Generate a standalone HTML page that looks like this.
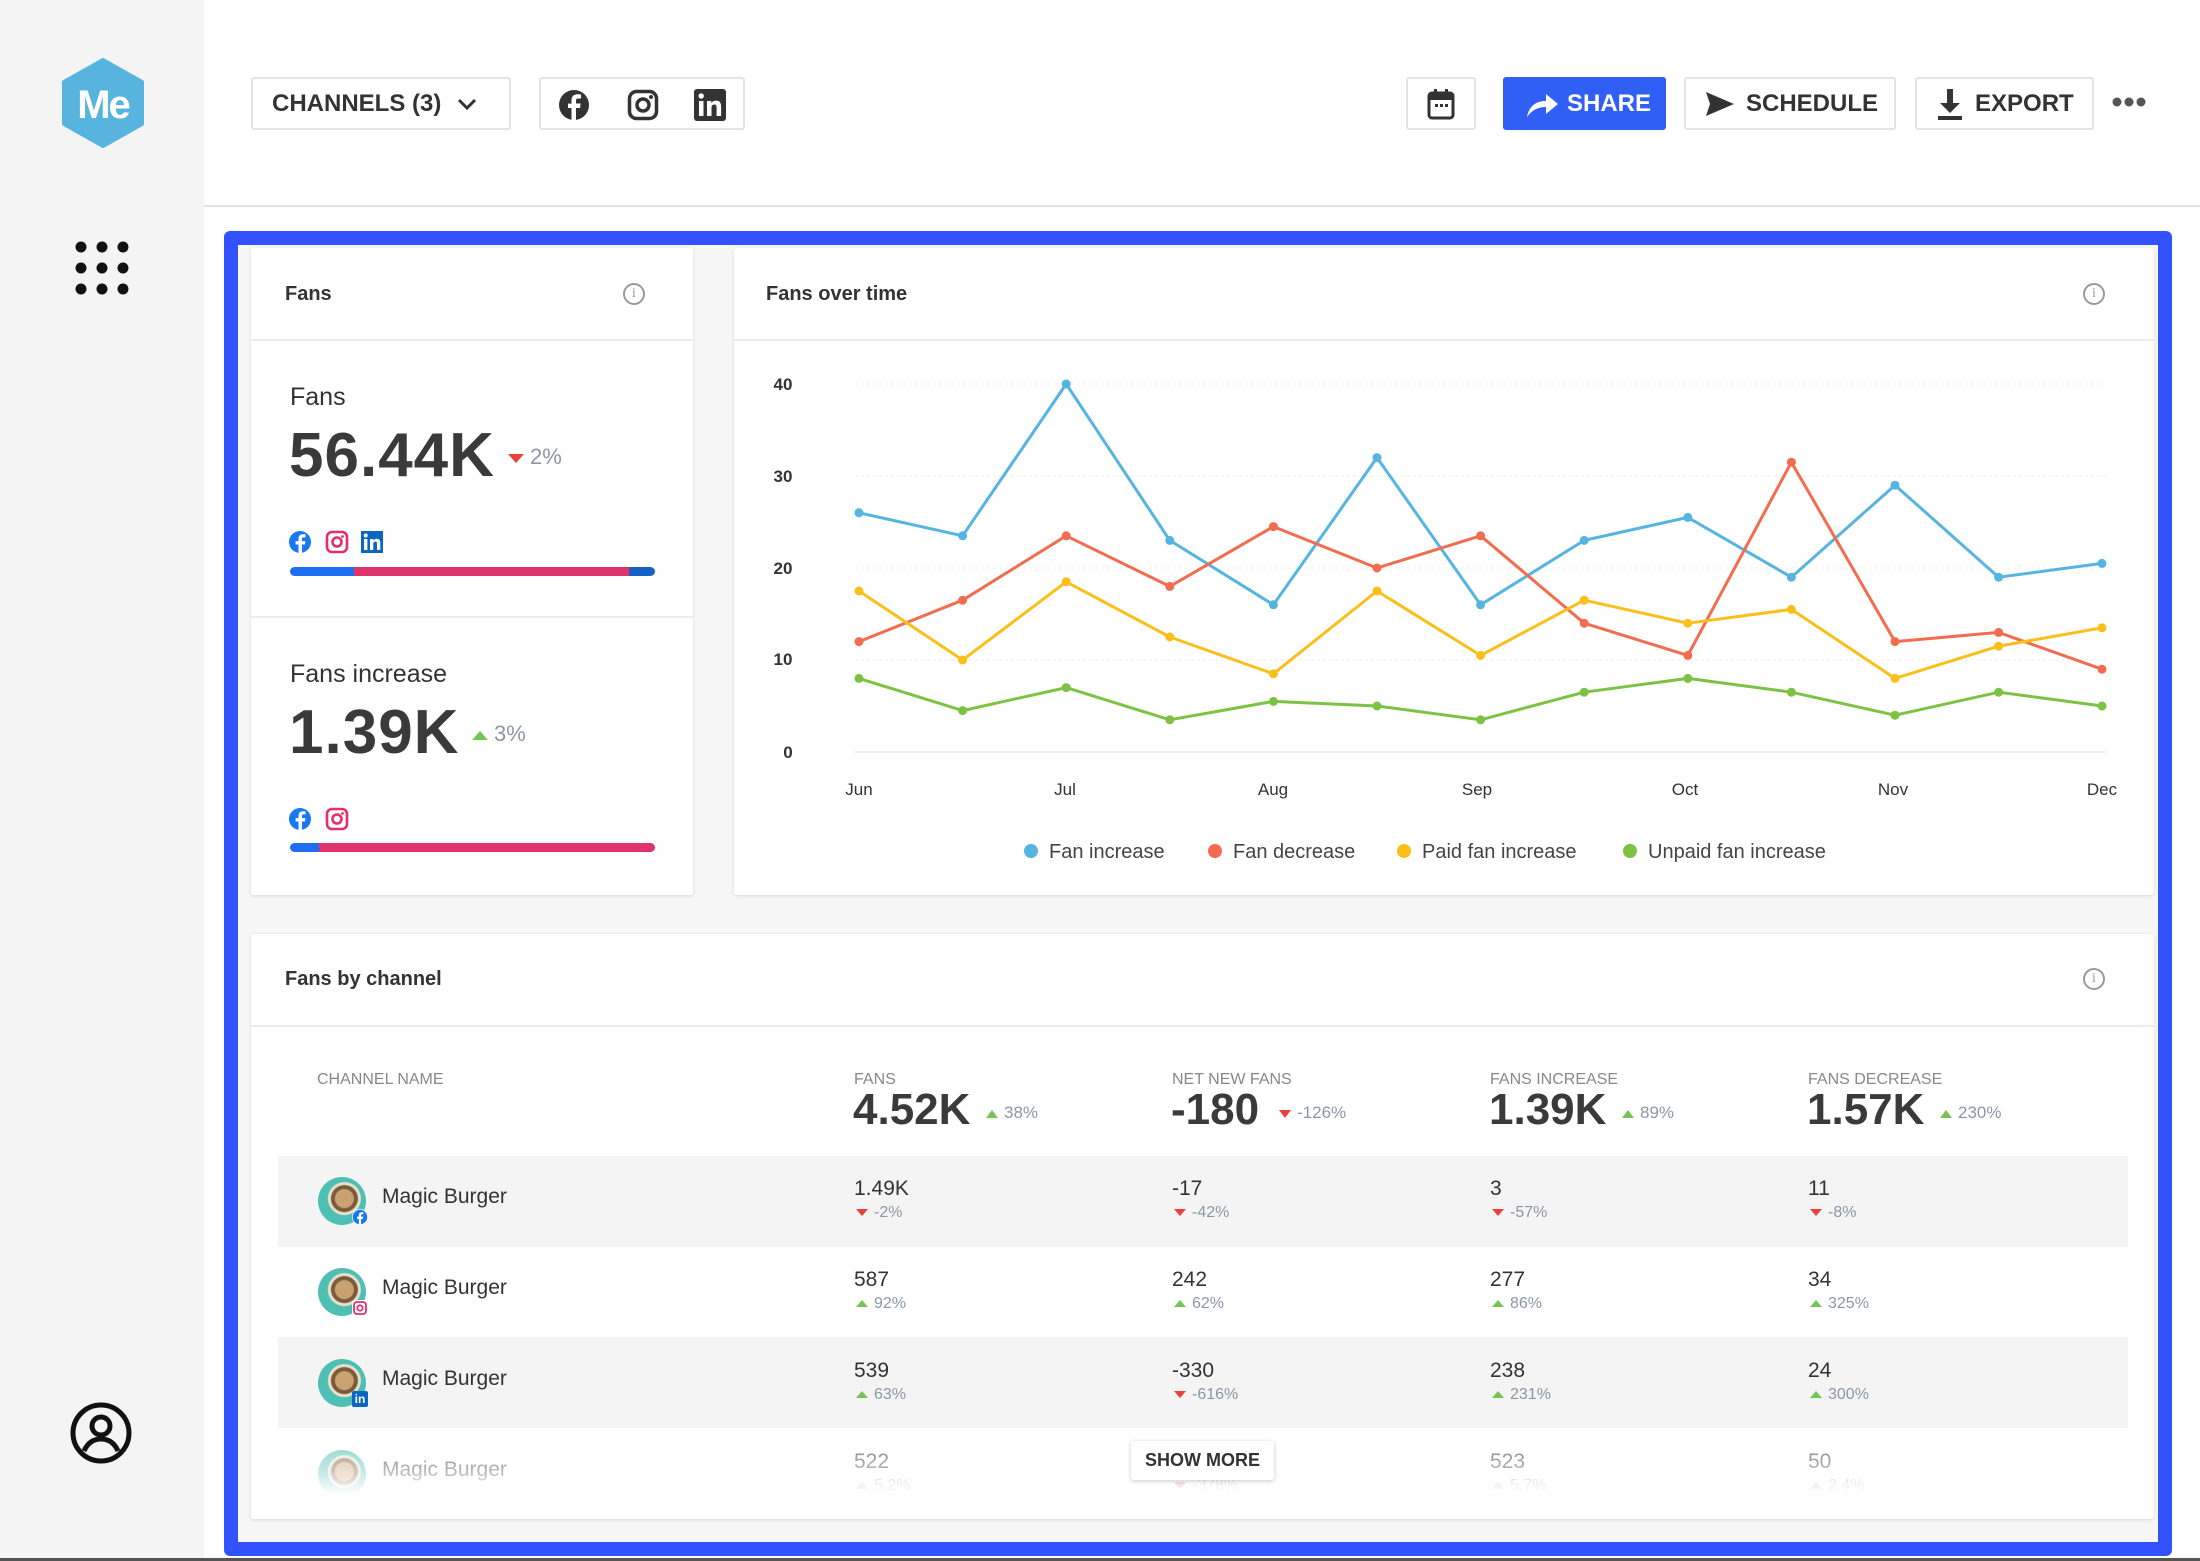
<!DOCTYPE html>
<html><head><meta charset="utf-8"><style>
*{box-sizing:border-box;margin:0;padding:0}
body{width:2200px;height:1561px;position:relative;background:#fff;font-family:"Liberation Sans",Arial,sans-serif;color:#333;overflow:hidden}
.a{position:absolute}
.side{left:0;top:0;width:204px;height:1561px;background:#f4f4f4}
.btn{position:absolute;top:77px;height:53px;border:2px solid #e3e3e3;border-radius:3px;background:#fff;display:flex;align-items:center;font-weight:bold;font-size:24px;color:#333}
.frame{left:224px;top:231px;width:1948px;height:1325px;border:14px solid #3352ff;border-radius:6px;background:#f7f7f7}
.card{position:absolute;background:#fff;box-shadow:0 1px 4px rgba(0,0,0,.12);border-radius:3px}
.ttl{position:absolute;font-size:20px;font-weight:bold;color:#333}
.info{position:absolute;width:22px;height:22px;border:2px solid #999;border-radius:50%;font-size:14px;color:#999;text-align:center;line-height:18px;font-family:"Liberation Serif",serif}
.hl{position:absolute;height:2px;background:#ececec}
.lbl{position:absolute;font-size:25px;color:#333}
.big{position:absolute;font-size:62px;font-weight:bold;color:#3a3a3a;letter-spacing:1px}
.pct{position:absolute;font-size:22px;color:#8a97a6}
.tdn{display:inline-block;width:0;height:0;border-left:8px solid transparent;border-right:8px solid transparent;border-top:9px solid #e8423a;vertical-align:middle;margin-right:6px}
.tup{display:inline-block;width:0;height:0;border-left:8px solid transparent;border-right:8px solid transparent;border-bottom:9px solid #76c554;vertical-align:middle;margin-right:6px}
.sm .tdn,.sm .tup{border-left-width:6px;border-right-width:6px;border-top-width:7px;border-bottom-width:7px}
.bar{position:absolute;height:9px;border-radius:5px;overflow:hidden;display:flex}
.ch{position:absolute;font-size:16px;color:#888;top:1071px}
.bv{position:absolute;font-size:44px;font-weight:bold;color:#3a3a3a;top:1085px}
.bp{position:absolute;font-size:17px;color:#8a97a6;top:1103px}
.row{position:absolute;left:278px;width:1850px;height:91px}
.v{position:absolute;font-size:21px;color:#333}
.p{position:absolute;font-size:16px;color:#8a97a6}
.nm{position:absolute;left:382px;font-size:21px;color:#333}
.av{position:absolute;left:318px;width:48px;height:48px;border-radius:50%;background:radial-gradient(circle at 55% 45%,#c9a270 0 9px,#7a5b3b 10px 13px,#e8e0c8 14px 16px,#4dbfb5 17px)}
.bd{position:absolute;width:16px;height:16px;border-radius:4px;background:#fff;left:352px}
.axis{font-size:17px;fill:#333}
</style></head><body>
<div class="a side"></div>
<!-- logo -->
<svg class="a" style="left:62px;top:58px" width="82" height="90" viewBox="0 0 82 90"><polygon points="41,2 80,24 80,66 41,88 2,66 2,24" fill="#56b4de" stroke="#56b4de" stroke-width="4" stroke-linejoin="round"/><text x="41" y="60" text-anchor="middle" font-family="Liberation Sans" font-weight="bold" font-size="40" fill="#fff" letter-spacing="-2">Me</text></svg>
<!-- grid -->
<svg class="a" style="left:75px;top:241px" width="54" height="54"><g fill="#111">
<circle cx="6" cy="6" r="5.5"/><circle cx="27" cy="6" r="5.5"/><circle cx="48" cy="6" r="5.5"/>
<circle cx="6" cy="27" r="5.5"/><circle cx="27" cy="27" r="5.5"/><circle cx="48" cy="27" r="5.5"/>
<circle cx="6" cy="48" r="5.5"/><circle cx="27" cy="48" r="5.5"/><circle cx="48" cy="48" r="5.5"/></g></svg>
<!-- user -->
<svg class="a" style="left:69px;top:1401px" width="64" height="64" viewBox="0 0 64 64"><circle cx="32" cy="32" r="28" fill="none" stroke="#111" stroke-width="5"/><circle cx="32" cy="25" r="9" fill="none" stroke="#111" stroke-width="5"/><path d="M15 50c4-9 10-12 17-12s13 3 17 12" fill="none" stroke="#111" stroke-width="5"/></svg>

<!-- header -->
<div class="btn" style="left:251px;width:260px;padding-left:19px">CHANNELS (3)<svg style="margin-left:16px" width="20" height="14"><path d="M2 3l8 8 8-8" fill="none" stroke="#333" stroke-width="3"/></svg></div>
<div class="btn" style="left:539px;width:206px">
<svg class="a" style="left:17px;top:10px" width="32" height="32" viewBox="0 0 32 32"><circle cx="16" cy="16" r="15" fill="#333"/><path d="M18 31V19h4l.6-4.5H18v-2.8c0-1.3.4-2.2 2.2-2.2H23V5.5c-.5 0-1.9-.2-3.6-.2-3.5 0-5.9 2.1-5.9 6v3.3H10V19h3.5v12z" fill="#fff"/></svg>
<svg class="a" style="left:86px;top:10px" width="32" height="32" viewBox="0 0 32 32"><rect x="2.5" y="2.5" width="27" height="27" rx="7" fill="none" stroke="#333" stroke-width="3.5"/><circle cx="16" cy="16" r="6" fill="none" stroke="#333" stroke-width="3.5"/><circle cx="24" cy="8" r="2" fill="#333"/></svg>
<svg class="a" style="left:153px;top:10px" width="32" height="32" viewBox="0 0 32 32"><rect width="32" height="32" rx="3" fill="#333"/><rect x="5" y="12" width="4.5" height="15" fill="#fff"/><circle cx="7.2" cy="7" r="2.7" fill="#fff"/><path d="M13 12h4.3v2.2c.8-1.4 2.4-2.6 4.8-2.6 4.2 0 5 2.7 5 6.3V27h-4.5v-8c0-1.9-.1-3.5-2.3-3.5s-2.8 1.6-2.8 3.4V27H13z" fill="#fff"/></svg>
</div>
<div class="btn" style="left:1406px;width:70px;justify-content:center"><svg width="30" height="32" viewBox="0 0 30 32"><rect x="3" y="5" width="24" height="25" rx="3" fill="none" stroke="#333" stroke-width="3"/><rect x="3" y="5" width="24" height="7" fill="#333"/><rect x="8" y="1" width="3" height="7" fill="#333"/><rect x="19" y="1" width="3" height="7" fill="#333"/><rect x="9" y="16" width="3" height="3" fill="#333"/><rect x="14" y="16" width="3" height="3" fill="#333"/><rect x="19" y="16" width="3" height="3" fill="#333"/></svg></div>
<div class="btn" style="left:1503px;width:163px;background:#2f5ff5;border-color:#2f5ff5;color:#fff;padding-left:20px"><svg width="34" height="28" viewBox="0 0 34 28"><path d="M2 27c2-11 9-16 19-16V4l12 10-12 10v-7c-8 0-14 3-19 10z" fill="#fff"/></svg><span style="margin-left:8px">SHARE</span></div>
<div class="btn" style="left:1684px;width:212px;padding-left:18px"><svg width="32" height="28" viewBox="0 0 32 28"><path d="M2 2l28 12L2 26l4-12z" fill="#333"/></svg><span style="margin-left:10px">SCHEDULE</span></div>
<div class="btn" style="left:1915px;width:179px;padding-left:18px"><svg width="30" height="34" viewBox="0 0 30 34"><path d="M12 2h6v14h7L15 26 5 16h7z" fill="#333"/><rect x="3" y="29" width="24" height="4" fill="#333"/></svg><span style="margin-left:10px">EXPORT</span></div>
<svg class="a" style="left:2112px;top:96px" width="34" height="12"><circle cx="5" cy="6" r="4.5" fill="#555"/><circle cx="17" cy="6" r="4.5" fill="#555"/><circle cx="29" cy="6" r="4.5" fill="#555"/></svg>
<div class="a" style="left:204px;top:205px;width:1996px;height:2px;background:#e2e2e2"></div>

<div class="a frame"></div>

<!-- Fans card -->
<div class="card" style="left:251px;top:248px;width:442px;height:647px"></div>
<div class="ttl" style="left:285px;top:283px">Fans</div>
<div class="info" style="left:623px;top:283px">i</div>
<div class="hl" style="left:251px;top:339px;width:442px"></div>
<div class="lbl" style="left:290px;top:383px">Fans</div>
<div class="big" style="left:289px;top:420px">56.44K</div>
<div class="pct" style="left:508px;top:444px"><span class="tdn"></span>2%</div>
<svg class="a" style="left:289px;top:530px" width="100" height="24" viewBox="0 0 100 24">
<circle cx="11" cy="12" r="11" fill="#1877f2"/><path d="M13 23v-8.5h3l.4-3.4H13V9c0-1 .3-1.6 1.7-1.6h1.8V4.3c-.3 0-1.4-.1-2.6-.1-2.6 0-4.4 1.6-4.4 4.5v2.4H6.6v3.4h2.9V23z" fill="#fff"/>
<rect x="38" y="2" width="20" height="20" rx="5" fill="none" stroke="#e1306c" stroke-width="2.6"/><circle cx="48" cy="12" r="4.5" fill="none" stroke="#e1306c" stroke-width="2.6"/><circle cx="53.5" cy="6.5" r="1.4" fill="#e1306c"/>
<rect x="72" y="1" width="22" height="22" fill="#0a66c2"/><rect x="75" y="9" width="3.4" height="11" fill="#fff"/><circle cx="76.7" cy="5.5" r="2" fill="#fff"/><path d="M81 9h3.2v1.6c.6-1 1.8-1.9 3.5-1.9 3 0 3.6 2 3.6 4.6V20h-3.3v-5.8c0-1.4-.1-2.6-1.7-2.6s-2 1.2-2 2.5V20H81z" fill="#fff"/></svg>
<div class="bar" style="left:290px;top:567px;width:365px"><div style="width:64px;background:#1d6ef2"></div><div style="width:275px;background:#e0336c"></div><div style="flex:1;background:#1662c4"></div></div>
<div class="hl" style="left:251px;top:616px;width:442px"></div>
<div class="lbl" style="left:290px;top:660px">Fans increase</div>
<div class="big" style="left:289px;top:697px">1.39K</div>
<div class="pct" style="left:472px;top:721px"><span class="tup"></span>3%</div>
<svg class="a" style="left:289px;top:807px" width="70" height="24" viewBox="0 0 70 24">
<circle cx="11" cy="12" r="11" fill="#1877f2"/><path d="M13 23v-8.5h3l.4-3.4H13V9c0-1 .3-1.6 1.7-1.6h1.8V4.3c-.3 0-1.4-.1-2.6-.1-2.6 0-4.4 1.6-4.4 4.5v2.4H6.6v3.4h2.9V23z" fill="#fff"/>
<rect x="38" y="2" width="20" height="20" rx="5" fill="none" stroke="#e1306c" stroke-width="2.6"/><circle cx="48" cy="12" r="4.5" fill="none" stroke="#e1306c" stroke-width="2.6"/><circle cx="53.5" cy="6.5" r="1.4" fill="#e1306c"/></svg>
<div class="bar" style="left:290px;top:843px;width:365px"><div style="width:29px;background:#1d6ef2"></div><div style="flex:1;background:#e0336c"></div></div>

<!-- Chart card -->
<div class="card" style="left:734px;top:248px;width:1420px;height:647px"></div>
<div class="ttl" style="left:766px;top:283px">Fans over time</div>
<div class="info" style="left:2083px;top:283px">i</div>
<div class="hl" style="left:734px;top:339px;width:1420px"></div>
<svg class="a" style="left:0;top:0" width="2200" height="1561" viewBox="0 0 2200 1561">
<defs>
<marker id="mb" markerWidth="10" markerHeight="10" refX="5" refY="5" markerUnits="userSpaceOnUse"><circle cx="5" cy="5" r="4.5" fill="#56b4e0"/></marker>
<marker id="mr" markerWidth="10" markerHeight="10" refX="5" refY="5" markerUnits="userSpaceOnUse"><circle cx="5" cy="5" r="4.5" fill="#f26c4f"/></marker>
<marker id="my" markerWidth="10" markerHeight="10" refX="5" refY="5" markerUnits="userSpaceOnUse"><circle cx="5" cy="5" r="4.5" fill="#fbbf1a"/></marker>
<marker id="mg" markerWidth="10" markerHeight="10" refX="5" refY="5" markerUnits="userSpaceOnUse"><circle cx="5" cy="5" r="4.5" fill="#7dc242"/></marker>
</defs>
<g stroke="#ececec" stroke-width="1" stroke-dasharray="3 3"><line x1="855" y1="384" x2="2106" y2="384"/><line x1="855" y1="476" x2="2106" y2="476"/><line x1="855" y1="568" x2="2106" y2="568"/><line x1="855" y1="660" x2="2106" y2="660"/></g>
<line x1="855" y1="752" x2="2106" y2="752" stroke="#ddd"/>
<g class="axis" text-anchor="middle" font-weight="bold" font-size="16"><text x="783" y="390">40</text><text x="783" y="482">30</text><text x="783" y="574">20</text><text x="783" y="665">10</text><text x="788" y="758">0</text></g>
<g class="axis" text-anchor="middle"><text x="859" y="795">Jun</text><text x="1065" y="795">Jul</text><text x="1273" y="795">Aug</text><text x="1477" y="795">Sep</text><text x="1685" y="795">Oct</text><text x="1893" y="795">Nov</text><text x="2102" y="795">Dec</text></g>
<g fill="none" stroke-width="3" stroke-linejoin="round">
<polyline stroke="#56b4e0" marker-start="url(#mb)" marker-mid="url(#mb)" marker-end="url(#mb)" points="859,512.8 962.6,535.8 1066.2,384 1169.8,540.4 1273.4,604.8 1377,457.6 1480.6,604.8 1584.2,540.4 1687.8,517.4 1791.4,577.2 1895,485.2 1998.6,577.2 2102,563.4"/>
<polyline stroke="#f26c4f" marker-start="url(#mr)" marker-mid="url(#mr)" marker-end="url(#mr)" points="859,641.6 962.6,600.2 1066.2,535.8 1169.8,586.4 1273.4,526.6 1377,568 1480.6,535.8 1584.2,623.2 1687.8,655.4 1791.4,462.2 1895,641.6 1998.6,632.4 2102,669.2"/>
<polyline stroke="#fbbf1a" marker-start="url(#my)" marker-mid="url(#my)" marker-end="url(#my)" points="859,591 962.6,660 1066.2,581.8 1169.8,637 1273.4,673.8 1377,591 1480.6,655.4 1584.2,600.2 1687.8,623.2 1791.4,609.4 1895,678.4 1998.6,646.2 2102,627.8"/>
<polyline stroke="#7dc242" marker-start="url(#mg)" marker-mid="url(#mg)" marker-end="url(#mg)" points="859,678.4 962.6,710.6 1066.2,687.6 1169.8,719.8 1273.4,701.4 1377,706 1480.6,719.8 1584.2,692.2 1687.8,678.4 1791.4,692.2 1895,715.2 1998.6,692.2 2102,706"/>
</g>
<g font-size="20" fill="#444">
<circle cx="1031" cy="851" r="7" fill="#56b4e0"/><text x="1049" y="858">Fan increase</text>
<circle cx="1215" cy="851" r="7" fill="#f26c4f"/><text x="1233" y="858">Fan decrease</text>
<circle cx="1404" cy="851" r="7" fill="#fbbf1a"/><text x="1422" y="858">Paid fan increase</text>
<circle cx="1630" cy="851" r="7" fill="#7dc242"/><text x="1648" y="858">Unpaid fan increase</text>
</g>
</svg>

<!-- Table card -->
<div class="card" style="left:251px;top:934px;width:1903px;height:585px"></div>
<div class="ttl" style="left:285px;top:968px">Fans by channel</div>
<div class="info" style="left:2083px;top:968px">i</div>
<div class="hl" style="left:251px;top:1025px;width:1903px"></div>
<div class="ch" style="left:317px">CHANNEL NAME</div>
<div class="ch" style="left:854px">FANS</div>
<div class="ch" style="left:1172px">NET NEW FANS</div>
<div class="ch" style="left:1490px">FANS INCREASE</div>
<div class="ch" style="left:1808px">FANS DECREASE</div>
<div class="bv" style="left:853px">4.52K</div><div class="bp" style="left:986px"><span class="tup" style="border-width:0 6px 8px"></span>38%</div>
<div class="bv" style="left:1171px">-180</div><div class="bp" style="left:1279px"><span class="tdn" style="border-width:8px 6px 0"></span>-126%</div>
<div class="bv" style="left:1489px">1.39K</div><div class="bp" style="left:1622px"><span class="tup" style="border-width:0 6px 8px"></span>89%</div>
<div class="bv" style="left:1807px">1.57K</div><div class="bp" style="left:1940px"><span class="tup" style="border-width:0 6px 8px"></span>230%</div>

<div class="row" style="top:1156px;background:#f4f4f4"></div>
<div class="row" style="top:1337px;background:#f4f4f4"></div>

<!-- rows -->
<div class="av" style="top:1177px"></div><div class="bd" style="top:1209px;border-radius:50%"><svg width="16" height="16" viewBox="0 0 22 22"><circle cx="11" cy="11" r="10" fill="#1877f2"/><path d="M12.5 21v-7.5h2.6l.4-3h-3V8.6c0-.9.3-1.4 1.5-1.4h1.6V4.5c-.3 0-1.2-.1-2.3-.1-2.3 0-3.9 1.4-3.9 4v2.1H7v3h2.4V21z" fill="#fff"/></svg></div>
<div class="nm" style="top:1185px">Magic Burger</div>
<div class="v" style="left:854px;top:1177px">1.49K</div><div class="p" style="left:856px;top:1204px"><span class="tdn" style="border-width:7px 6px 0"></span>-2%</div>
<div class="v" style="left:1172px;top:1177px">-17</div><div class="p" style="left:1174px;top:1204px"><span class="tdn" style="border-width:7px 6px 0"></span>-42%</div>
<div class="v" style="left:1490px;top:1177px">3</div><div class="p" style="left:1492px;top:1204px"><span class="tdn" style="border-width:7px 6px 0"></span>-57%</div>
<div class="v" style="left:1808px;top:1177px">11</div><div class="p" style="left:1810px;top:1204px"><span class="tdn" style="border-width:7px 6px 0"></span>-8%</div>

<div class="av" style="top:1268px"></div><div class="bd" style="top:1300px"><svg width="16" height="16" viewBox="0 0 16 16"><rect x="2" y="2" width="12" height="12" rx="3" fill="none" stroke="#e1306c" stroke-width="1.8"/><circle cx="8" cy="8" r="2.7" fill="none" stroke="#e1306c" stroke-width="1.8"/></svg></div>
<div class="nm" style="top:1276px">Magic Burger</div>
<div class="v" style="left:854px;top:1268px">587</div><div class="p" style="left:856px;top:1295px"><span class="tup" style="border-width:0 6px 7px"></span>92%</div>
<div class="v" style="left:1172px;top:1268px">242</div><div class="p" style="left:1174px;top:1295px"><span class="tup" style="border-width:0 6px 7px"></span>62%</div>
<div class="v" style="left:1490px;top:1268px">277</div><div class="p" style="left:1492px;top:1295px"><span class="tup" style="border-width:0 6px 7px"></span>86%</div>
<div class="v" style="left:1808px;top:1268px">34</div><div class="p" style="left:1810px;top:1295px"><span class="tup" style="border-width:0 6px 7px"></span>325%</div>

<div class="av" style="top:1359px"></div><div class="bd" style="top:1391px;background:#0a66c2;border-radius:2px;color:#fff;font-size:12px;font-weight:bold;text-align:center;line-height:16px">in</div>
<div class="nm" style="top:1367px">Magic Burger</div>
<div class="v" style="left:854px;top:1359px">539</div><div class="p" style="left:856px;top:1386px"><span class="tup" style="border-width:0 6px 7px"></span>63%</div>
<div class="v" style="left:1172px;top:1359px">-330</div><div class="p" style="left:1174px;top:1386px"><span class="tdn" style="border-width:7px 6px 0"></span>-616%</div>
<div class="v" style="left:1490px;top:1359px">238</div><div class="p" style="left:1492px;top:1386px"><span class="tup" style="border-width:0 6px 7px"></span>231%</div>
<div class="v" style="left:1808px;top:1359px">24</div><div class="p" style="left:1810px;top:1386px"><span class="tup" style="border-width:0 6px 7px"></span>300%</div>

<div class="av" style="top:1450px"></div>
<div class="nm" style="top:1458px">Magic Burger</div>
<div class="v" style="left:854px;top:1450px">522</div><div class="p" style="left:856px;top:1477px"><span class="tup" style="border-width:0 6px 7px"></span>5.2%</div>
<div class="v" style="left:1172px;top:1450px">12</div><div class="p" style="left:1174px;top:1477px"><span class="tdn" style="border-width:7px 6px 0"></span>-378%</div>
<div class="v" style="left:1490px;top:1450px">523</div><div class="p" style="left:1492px;top:1477px"><span class="tup" style="border-width:0 6px 7px"></span>5.7%</div>
<div class="v" style="left:1808px;top:1450px">50</div><div class="p" style="left:1810px;top:1477px"><span class="tup" style="border-width:0 6px 7px"></span>2.4%</div>
<div class="a" style="left:278px;top:1440px;width:1850px;height:78px;background:linear-gradient(rgba(255,255,255,.35),rgba(255,255,255,.7) 45%,#fff 70%)"></div>
<div class="a" style="left:1131px;top:1441px;width:143px;height:39px;background:#fff;box-shadow:0 1px 5px rgba(0,0,0,.22);border-radius:3px;font-size:18px;font-weight:bold;color:#333;text-align:center;line-height:39px">SHOW MORE</div>
<div class="a" style="left:0;top:1558px;width:2200px;height:3px;background:#555"></div>
</body></html>
